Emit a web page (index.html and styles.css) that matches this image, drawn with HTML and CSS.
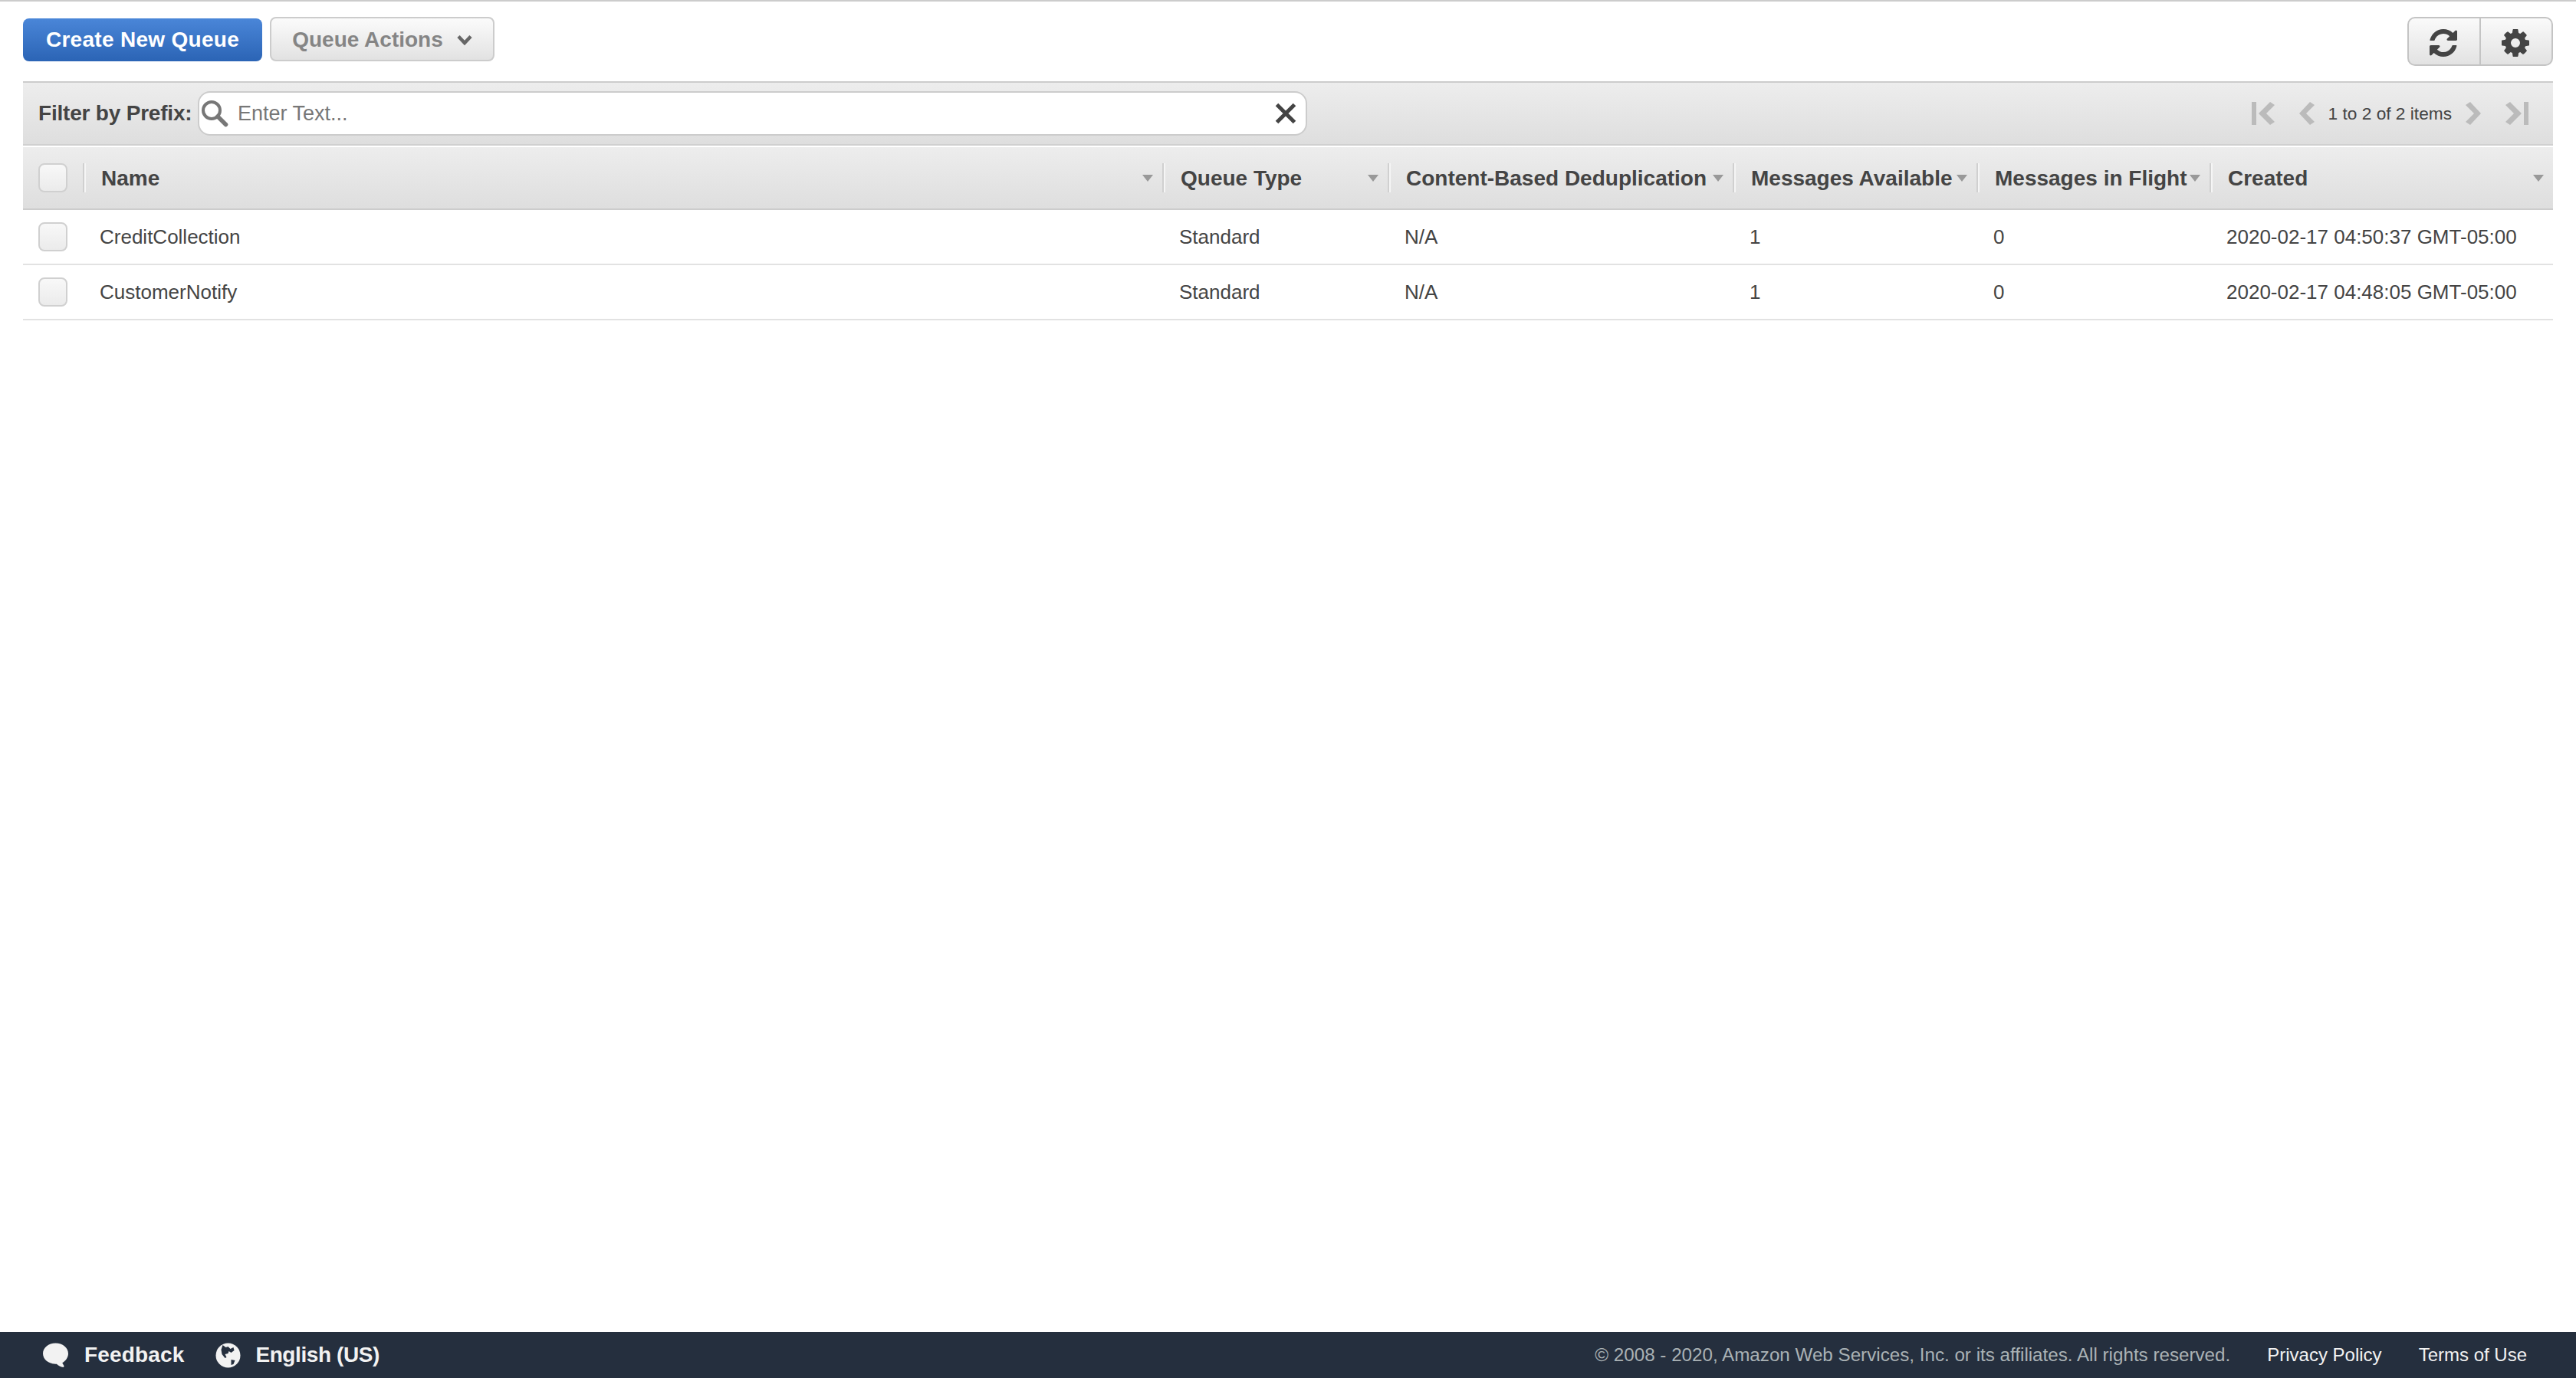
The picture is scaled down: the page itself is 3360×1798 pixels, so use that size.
FILE: index.html
```html
<!DOCTYPE html>
<html lang="en">
<head>
<meta charset="utf-8">
<title>Simple Queue Service</title>
<link rel="stylesheet" href="styles.css">
</head>
<body>
<main class="main">
  <div class="toolbar">
    <div class="actions">
      <button class="btn btn-primary" type="button">Create New Queue</button>
      <button class="btn btn-default" type="button">Queue Actions
        <svg class="chev" viewBox="0 0 20 14"><path d="M2 2.500 L10 11 L18 2.500" fill="none" stroke="#666" stroke-width="4.500"/></svg>
      </button>
    </div>
    <div class="icon-group">
      <button class="icon-btn" type="button" aria-label="Refresh">
        <svg class="ico" viewBox="128 128 1536 1536"><path fill="#444" d="M1639 1056q0 5-1 7-64 268-268 434.5t-478 166.5q-146 0-282.5-55t-243.5-157l-129 129q-19 19-45 19t-45-19-19-45v-448q0-26 19-45t45-19h448q26 0 45 19t19 45-19 45l-137 137q71 66 161 102t187 36q134 0 250-65t186-179q11-17 53-117 8-23 30-23h192q13 0 22.5 9.5t9.5 22.5zm25-800v448q0 26-19 45t-45 19h-448q-26 0-45-19t-19-45 19-45l138-138q-148-137-349-137-134 0-250 65t-186 179q-11 17-53 117-8 23-30 23h-199q-13 0-22.5-9.5t-9.5-22.5v-7q65-268 270-434.5t480-166.5q146 0 284 55.5t245 156.5l130-129q19-19 45-19t45 19 19 45z"/></svg>
      </button>
      <button class="icon-btn" type="button" aria-label="Settings">
        <svg class="ico" viewBox="128 128 1536 1536"><path fill="#444" d="M1152 896q0-106-75-181t-181-75-181 75-75 181 75 181 181 75 181-75 75-181zm512-109v222q0 12-8 23t-20 13l-185 28q-19 54-39 91 35 50 107 138 10 12 10 25t-9 23q-27 37-99 108t-94 71q-12 0-26-9l-138-108q-44 23-91 38-16 136-29 186-7 28-36 28h-222q-14 0-24.5-8.5t-11.5-21.5l-28-184q-49-16-90-37l-141 107q-10 9-25 9-14 0-25-11-126-114-165-168-7-10-7-23 0-12 8-23 15-21 51-66.5t54-70.5q-27-50-41-99l-183-27q-13-2-21-12.5t-8-23.5v-222q0-12 8-23t19-13l186-28q14-46 39-92-40-57-107-138-10-12-10-24 0-10 9-23 26-36 98.5-107.5t94.5-71.5q13 0 26 10l138 107q44-23 91-38 16-136 29-186 7-28 36-28h222q14 0 24.5 8.5t11.5 21.5l28 184q49 16 90 37l142-107q9-9 24-9 13 0 25 10 129 119 165 170 7 8 7 22 0 12-8 23-15 21-51 66.5t-54 70.5q26 50 41 98l183 28q13 2 21 12.5t8 23.5z"/></svg>
      </button>
    </div>
  </div>

  <div class="filterbar">
    <div class="filter">
      <label class="filter-label" for="prefix">Filter by Prefix:</label>
      <div class="search">
        <svg class="search-ico" viewBox="0 0 36 36"><circle cx="14" cy="14" r="11" fill="none" stroke="#777" stroke-width="4"/><path d="M22 22 L32.500 32.500" stroke="#777" stroke-width="5.500" stroke-linecap="round"/></svg>
        <input class="search-input" id="prefix" type="text" placeholder="Enter Text...">
        <svg class="clear-ico" viewBox="0 0 28 28"><path d="M2.500 2.500 L25.500 25.500 M25.500 2.500 L2.500 25.500" stroke="#444" stroke-width="5"/></svg>
      </div>
    </div>
    <div class="pager">
      <svg class="pg pg-end" viewBox="0 0 30 30"><path fill="#bbb" d="M0 0h6v30h-6zM24 0l6 4-11 11 11 11-6 4-15-15z"/></svg>
      <svg class="pg pg-step" viewBox="0 0 20 30"><path fill="#bbb" d="M14 0l6 4-11 11 11 11-6 4-14-15z"/></svg>
      <span class="pg-text">1 to 2 of 2 items</span>
      <svg class="pg pg-step" viewBox="0 0 20 30"><path fill="#bbb" d="M6 0l-6 4 11 11-11 11 6 4 14-15z"/></svg>
      <svg class="pg pg-end" viewBox="0 0 30 30"><path fill="#bbb" d="M24 0h6v30h-6zM6 0l-6 4 11 11-11 11 6 4 15-15z"/></svg>
    </div>
  </div>

  <div class="grid-head">
    <div class="check-cell"><span class="check"></span></div>
    <div class="hcell">Name<i class="caret"></i></div>
    <div class="hcell">Queue Type<i class="caret"></i></div>
    <div class="hcell">Content-Based Deduplication<i class="caret"></i></div>
    <div class="hcell">Messages Available<i class="caret"></i></div>
    <div class="hcell">Messages in Flight<i class="caret"></i></div>
    <div class="hcell">Created<i class="caret"></i></div>
  </div>

  <div class="grid-row">
    <div class="check-cell"><span class="check"></span></div>
    <div class="cell">CreditCollection</div>
    <div class="cell">Standard</div>
    <div class="cell">N/A</div>
    <div class="cell">1</div>
    <div class="cell">0</div>
    <div class="cell">2020-02-17 04:50:37 GMT-05:00</div>
  </div>
  <div class="grid-row">
    <div class="check-cell"><span class="check"></span></div>
    <div class="cell">CustomerNotify</div>
    <div class="cell">Standard</div>
    <div class="cell">N/A</div>
    <div class="cell">1</div>
    <div class="cell">0</div>
    <div class="cell">2020-02-17 04:48:05 GMT-05:00</div>
  </div>
</main>

<footer class="footer">
  <div class="foot-left">
    <span class="foot-item foot-feedback">
      <svg class="foot-ico" viewBox="0 0 34 33"><path fill="#f2f2f2" d="M17 0c9.500 0 17 6 17 14 0 5.500-3.500 10-8 12.500l2.500 4.500-1 1.500c-3.500-.5-7-2.500-9-4.500-.5 0-1 0-1.500 0C7.500 28 0 22 0 14S7.500 0 17 0z"/></svg>
      Feedback
    </span>
    <span class="foot-item foot-lang">
      <svg class="foot-ico" viewBox="0 0 32 33"><circle cx="16" cy="16.500" r="16" fill="#f2f2f2"/><path fill="#252f3e" d="M9 3l4 3 3-1 3 3 4-2 1 4-4 3-3-2-1 3-4 1 2 4-2 1-4-5-1-6zM20 22l5 1-2 5-3 1z"/></svg>
      English (US)
    </span>
  </div>
  <div class="foot-right">
    <span class="copy">© 2008 - 2020, Amazon Web Services, Inc. or its affiliates. All rights reserved.</span>
    <a class="foot-link">Privacy Policy</a>
    <a class="foot-link">Terms of Use</a>
  </div>
</footer>
</body>
</html>
```

FILE: styles.css
```css
* { box-sizing: border-box; }
html, body { height: 100%; }
body {
  margin: 0;
  display: flex;
  flex-direction: column;
  min-height: 100vh;
  background: #fff;
  color: #444;
  font-family: "Liberation Sans", Arial, sans-serif;
  font-size: 26px;
  overflow: hidden;
}
.main {
  flex: 1;
  border-top: 2px solid #ccc;
  padding: 0 30px;
}
.toolbar {
  display: flex;
  justify-content: space-between;
  align-items: flex-start;
  padding-top: 20px;
  height: 104px;
}
.actions { display: flex; align-items: flex-end; gap: 10px; height: 58px; }
.btn {
  font-family: inherit;
  font-weight: bold;
  font-size: 28px;
  border-radius: 8px;
  padding: 0;
  display: flex;
  align-items: center;
  justify-content: center;
}
.btn-primary {
  width: 312px;
  height: 56px;
  color: #fff;
  border: 0;
  letter-spacing: .3px;
  background: linear-gradient(#4a86d8, #2b64b5);
}
.btn-default {
  width: 293px;
  height: 58px;
  padding-top: 2px;
  color: #858585;
  border: 2px solid #ccc;
  background: linear-gradient(#fbfbfb, #e2e2e2);
  gap: 18px;
}
.chev { width: 20px; height: 14px; }
.icon-group {
  display: flex;
  width: 190px;
  height: 64px;
  border: 2px solid #c4c4c4;
  border-radius: 10px;
  overflow: hidden;
  background: linear-gradient(#fafafa, #e2e2e2);
}
.icon-btn {
  flex: 1;
  padding: 4px 2px 0 0;
  border: 0;
  background: none;
  display: flex;
  align-items: center;
  justify-content: center;
}
.icon-btn + .icon-btn { border-left: 2px solid #c4c4c4; }
.ico { width: 36px; height: 36px; }

.filterbar {
  height: 84px;
  border-top: 2px solid #ccc;
  border-bottom: 2px solid #d0d0d0;
  background: linear-gradient(#ededed, #dedede);
  display: flex;
  justify-content: space-between;
  align-items: center;
  padding: 0 32px 0 20px;
}
.filter { display: flex; align-items: center; }
.filter-label { font-weight: bold; font-size: 28px; letter-spacing: -.2px; width: 208px; white-space: nowrap; }
.search {
  width: 1447px;
  height: 58px;
  background: #fff;
  border: 2px solid #ccc;
  border-radius: 16px;
  display: flex;
  align-items: center;
  padding: 0 12px 0 2px;
  gap: 12px;
}
.search-ico { width: 36px; height: 36px; flex: none; }
.search-input {
  flex: 1;
  border: 0;
  outline: 0;
  background: none;
  font-family: inherit;
  font-size: 27px;
  color: #444;
  padding: 0;
}
.search-input::placeholder { color: #777; opacity: 1; }
.clear-ico { width: 28px; height: 28px; flex: none; }

.pager { display: flex; align-items: center; }
.pg { height: 30px; flex: none; }
.pg-end { width: 30px; }
.pg-step { width: 20px; }
.pg-end:first-child { margin-right: 32px; }
.pg-end:last-child { margin-left: 32px; }
.pg-text { font-size: 22.7px; margin: 0 18px; white-space: nowrap; }

.grid-head, .grid-row {
  display: grid;
  grid-template-columns: 80px 1408px 294px 450px 318px 304px 446px;
  align-items: center;
}
.grid-head {
  margin-top: 2px;
  height: 82px;
  background: linear-gradient(#ededed, #dedede);
  border-bottom: 2px solid #ccc;
}
.grid-row {
  height: 72px;
  border-bottom: 2px solid #e2e2e2;
}
.check-cell { padding-left: 20px; display: flex; }
.check {
  display: block;
  width: 38px;
  height: 38px;
  border: 2px solid #d0d0d0;
  border-radius: 8px;
  background: linear-gradient(#f8f8f8, #ebebeb);
}
.hcell {
  height: 38px;
  border-left: 2px solid #f5f5f5;
  box-shadow: -2px 0 0 #d0d0d0;
  padding: 1px 14px 0 20px;
  display: flex;
  align-items: center;
  justify-content: space-between;
  font-weight: bold;
  font-size: 28px;
  white-space: nowrap;
}
.hcell:last-child { padding-right: 12px; }
.caret {
  width: 0;
  height: 0;
  flex: none;
  border-left: 7px solid transparent;
  border-right: 7px solid transparent;
  border-top: 9px solid #999;
}
.cell { padding-left: 20px; white-space: nowrap; }

.footer {
  height: 60px;
  background: #252f3e;
  display: flex;
  justify-content: space-between;
  align-items: center;
  padding: 0 64px 0 56px;
}
.foot-left { display: flex; align-items: center; gap: 41px; }
.foot-item {
  display: flex;
  align-items: center;
  gap: 21px;
  color: #f2f2f2;
  font-weight: bold;
  font-size: 28px;
}
.foot-feedback { letter-spacing: .15px; }
.foot-lang { letter-spacing: -.4px; gap: 19px; }
.foot-ico { width: 33px; height: 33px; }
.foot-right { display: flex; align-items: center; gap: 48px; font-size: 24px; }
.copy { color: #aab2b5; font-size: 24.2px; }
.foot-link { color: #f2f2f2; }
```
